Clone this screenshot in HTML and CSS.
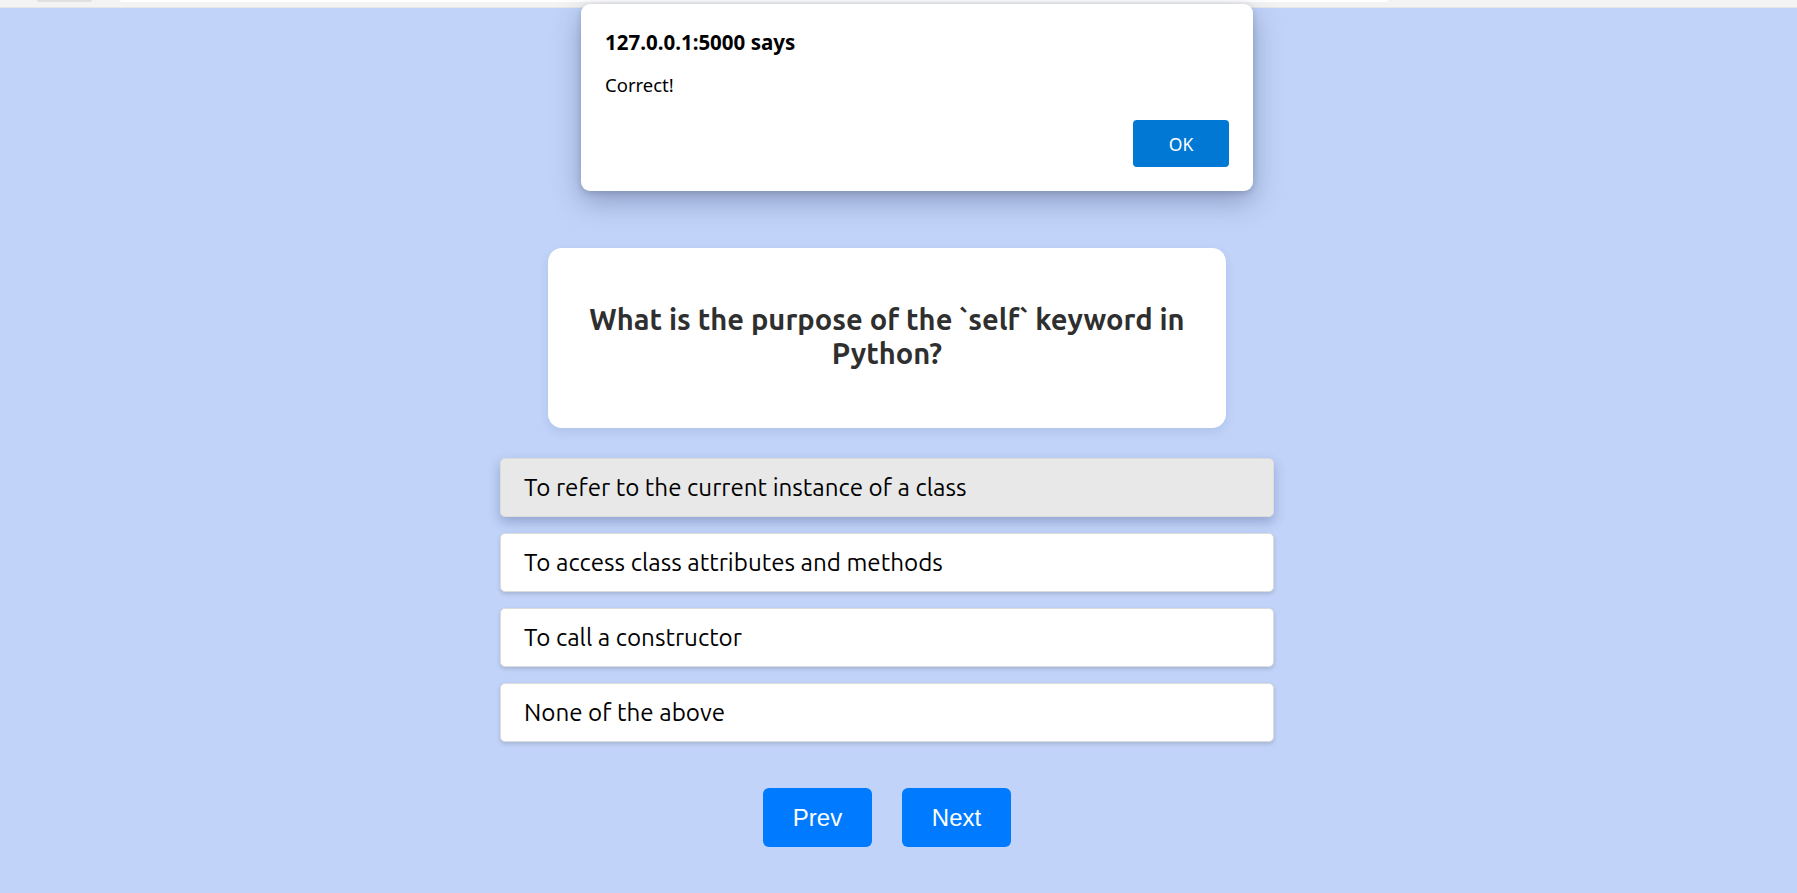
FILE: index.html
```html
<!DOCTYPE html>
<html lang="en">
<head>
<meta charset="utf-8">
<title>Quiz</title>
<link rel="stylesheet" href="styles.css">
</head>
<body>
<div class="chrome-strip">
  <div class="chrome-tab"></div>
  <div class="chrome-bar"></div>
</div>

<main class="quiz">
  <section class="question-card">
    <h2 class="question">What is the purpose of the `self` keyword in Python?</h2>
  </section>

  <ul class="options">
    <li class="option option-active">To refer to the current instance of a class</li>
    <li class="option">To access class attributes and methods</li>
    <li class="option">To call a constructor</li>
    <li class="option">None of the above</li>
  </ul>

  <div class="nav">
    <button class="nav-btn">Prev</button>
    <button class="nav-btn">Next</button>
  </div>
</main>

<div class="alert" role="dialog">
  <div class="alert-title">127.0.0.1:5000 says</div>
  <div class="alert-msg">Correct!</div>
  <div class="alert-actions">
    <button class="alert-ok">OK</button>
  </div>
</div>
</body>
</html>
```

FILE: styles.css
```css
html, body {
  margin: 0;
  padding: 0;
}

body {
  background: #c1d3f8;
  font-family: "Ubuntu", "Lato", "Open Sans", sans-serif;
  min-height: 893px;
  overflow: hidden;
}

.chrome-strip {
  height: 7px;
  background: #f3f3f3;
  border-bottom: 1px solid #e6e6e6;
  position: relative;
  display: flex;
  align-items: flex-start;
}

.chrome-tab {
  margin-left: 37px;
  width: 55px;
  height: 2px;
  background: #e0e0e0;
  border-radius: 0 0 3px 3px;
}

.chrome-bar {
  margin-left: 28px;
  width: 1268px;
  height: 2px;
  background: #ffffff;
  border-radius: 0 0 8px 8px;
}

.quiz {
  display: flex;
  flex-direction: column;
  align-items: center;
  padding-top: 240px;
  padding-right: 23px;
}

.question-card {
  width: 678px;
  box-sizing: border-box;
  height: 180px;
  padding: 0 40px 5px;
  background: #ffffff;
  border-radius: 14px;
  box-shadow: 0 4px 10px rgba(60, 80, 140, 0.12);
  display: flex;
  align-items: center;
  justify-content: center;
}

.question {
  margin: 0;
  font-size: 29.1px;
  line-height: 34px;
  font-weight: 700;
  color: #2f2f2f;
  text-align: center;
}

.options {
  list-style: none;
  margin: 30px 0 0;
  padding: 0;
  width: 774px;
  display: flex;
  flex-direction: column;
  gap: 16px;
}

.option {
  box-sizing: border-box;
  height: 59px;
  padding: 0 23px 1px;
  display: flex;
  align-items: center;
  background: #ffffff;
  border: 1px solid #dcdcdc;
  border-radius: 5px;
  font-size: 24.2px;
  color: #000000;
  box-shadow: 0 2px 4px rgba(0, 0, 0, 0.15);
}

.option-active {
  background: #e8e8e8;
  box-shadow: 0 5px 12px rgba(40, 60, 120, 0.3);
}

.nav {
  margin-top: 46px;
  display: flex;
  gap: 30px;
}

.nav-btn {
  width: 109px;
  height: 59px;
  border: none;
  border-radius: 6px;
  background: #007bff;
  color: #ffffff;
  font-family: "Liberation Sans", Arial, sans-serif;
  font-size: 24px;
  cursor: pointer;
}

.alert {
  position: absolute;
  left: 581px;
  top: 4px;
  width: 672px;
  height: 187px;
  box-sizing: border-box;
  padding: 24px 24px 24px 24px;
  background: #ffffff;
  border-radius: 9px;
  box-shadow: 0 10px 28px rgba(40, 55, 100, 0.35), 0 2px 6px rgba(0, 0, 0, 0.15);
  font-family: "Noto Sans", "Open Sans", sans-serif;
  color: #000000;
  display: flex;
  flex-direction: column;
}

.alert-title {
  font-size: 20.5px;
  font-weight: 700;
  line-height: 28px;
}

.alert-msg {
  margin-top: 16px;
  font-size: 18.5px;
  line-height: 26px;
}

.alert-actions {
  margin-top: auto;
  display: flex;
  justify-content: flex-end;
}

.alert-ok {
  width: 96px;
  height: 47px;
  border: none;
  border-radius: 4px;
  background: #0078d4;
  color: #ffffff;
  font-family: "Noto Sans", "Open Sans", sans-serif;
  font-size: 17.5px;
}
```
